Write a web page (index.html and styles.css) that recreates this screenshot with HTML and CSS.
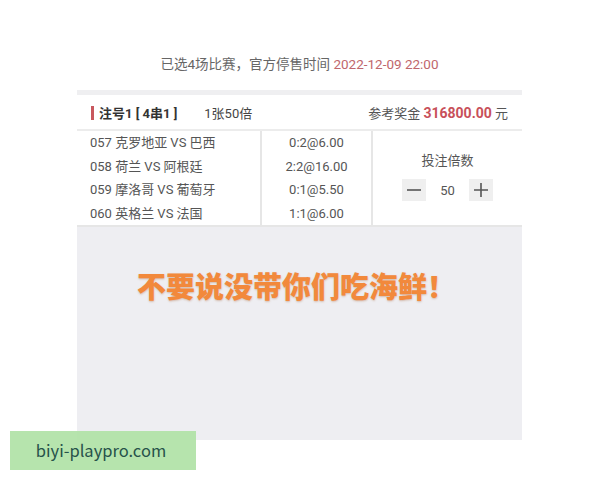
FILE: index.html
```html
<!DOCTYPE html>
<html lang="zh-CN">
<head>
<meta charset="utf-8">
<link rel="stylesheet" href="styles.css">
</head>
<body>
<div class="page">
  <div class="title">已选4场比赛，官方停售时间 <span class="date">2022-12-09 22:00</span></div>
  <div class="strip"></div>
  <div class="head">
    <div class="head-left">
      <span class="bar"></span>
      <span class="bet-no">注号1 [ 4串1 ]</span>
      <span class="times">1张50倍</span>
    </div>
    <div class="head-right">参考奖金 <span class="prize">316800.00</span> 元</div>
  </div>
  <div class="rows">
    <div class="col matches">
      <div class="row">057 克罗地亚 VS 巴西</div>
      <div class="row">058 荷兰 VS 阿根廷</div>
      <div class="row">059 摩洛哥 VS 葡萄牙</div>
      <div class="row">060 英格兰 VS 法国</div>
    </div>
    <div class="col odds">
      <div class="row">0:2@6.00</div>
      <div class="row">2:2@16.00</div>
      <div class="row">0:1@5.50</div>
      <div class="row">1:1@6.00</div>
    </div>
    <div class="col multi">
      <div class="multi-label">投注倍数</div>
      <div class="stepper">
        <span class="btn"><svg width="16" height="16" viewBox="0 0 16 16"><path d="M1 8h14" stroke="#555" stroke-width="1.6"/></svg></span>
        <span class="num">50</span>
        <span class="btn"><svg width="16" height="16" viewBox="0 0 16 16"><path d="M1 8h14M8 1v14" stroke="#555" stroke-width="1.6"/></svg></span>
      </div>
    </div>
  </div>
  <div class="banner">
    <div class="slogan">不要说没带你们吃海鲜！</div>
  </div>
</div>
<div class="watermark">biyi-playpro.com</div>
</body>
</html>
```
FILE: styles.css
```css
html, body {
  margin: 0;
  padding: 0;
  background: #fff;
}
body {
  font-family: Roboto, "Noto Sans CJK SC", sans-serif;
  color: #555;
  position: relative;
  width: 600px;
  height: 480px;
  overflow: hidden;
}
.page {
  margin-left: 77px;
  width: 445px;
}
.title {
  height: 90px;
  box-sizing: border-box;
  padding-top: 55px;
  line-height: 18px;
  font-size: 13.5px;
  text-align: center;
  color: #666;
}
.date {
  color: #c0666c;
}
.strip {
  height: 5px;
  background: #efeff1;
}
.head {
  height: 33px;
  border-bottom: 2px solid #ececec;
  display: flex;
  align-items: center;
  justify-content: space-between;
  padding: 1px 14px 0 14px;
  font-size: 13px;
}
.head-left {
  display: flex;
  align-items: center;
}
.bar {
  width: 3px;
  height: 14px;
  background: #c8585e;
  margin-right: 5px;
}
.bet-no {
  font-weight: bold;
  color: #333;
  font-size: 13px;
}
.times {
  margin-left: 27px;
  color: #444;
}
.head-right {
  color: #555;
}
.prize {
  color: #c8505a;
  font-weight: bold;
  font-size: 14px;
}
.rows {
  display: flex;
  height: 94px;
  border-bottom: 2px solid #e6e6e6;
}
.col {
  display: flex;
  flex-direction: column;
}
.matches {
  width: 185px;
  padding-left: 13px;
  box-sizing: border-box;
  border-right: 2px solid #e6e6e6;
}
.odds {
  width: 109px;
  border-right: 2px solid #e6e6e6;
  align-items: center;
}
.row {
  height: 23.5px;
  line-height: 23.5px;
  font-size: 13px;
  color: #555;
  white-space: nowrap;
}
.multi {
  flex: 1;
  align-items: center;
  padding-top: 21px;
}
.multi-label {
  font-size: 13px;
  color: #555;
  line-height: 18px;
}
.stepper {
  display: flex;
  align-items: center;
  margin-top: 9px;
}
.btn {
  width: 24px;
  height: 22px;
  background: #efefef;
  display: flex;
  align-items: center;
  justify-content: center;
}
.num {
  width: 43px;
  text-align: center;
  font-size: 13px;
  color: #555;
}
.banner {
  height: 213px;
  background: #eeeef2;
  display: flex;
  justify-content: center;
  padding-top: 41px;
  box-sizing: border-box;
}
.slogan {
  font-family: "Noto Sans CJK SC", sans-serif;
  font-weight: 900;
  font-size: 29px;
  line-height: 34px;
  color: #f2893c;
  margin-right: 6px;
  text-shadow: 0 1px 2px rgba(160, 90, 40, 0.35);
}
.watermark {
  position: absolute;
  left: 10px;
  top: 431px;
  width: 186px;
  height: 39px;
  background: rgba(176, 226, 166, 0.92);
  color: #27524a;
  font-family: "Noto Sans CJK SC", sans-serif;
  font-size: 16.5px;
  line-height: 39px;
  text-align: center;
  padding-right: 4px;
  box-sizing: border-box;
}
```
